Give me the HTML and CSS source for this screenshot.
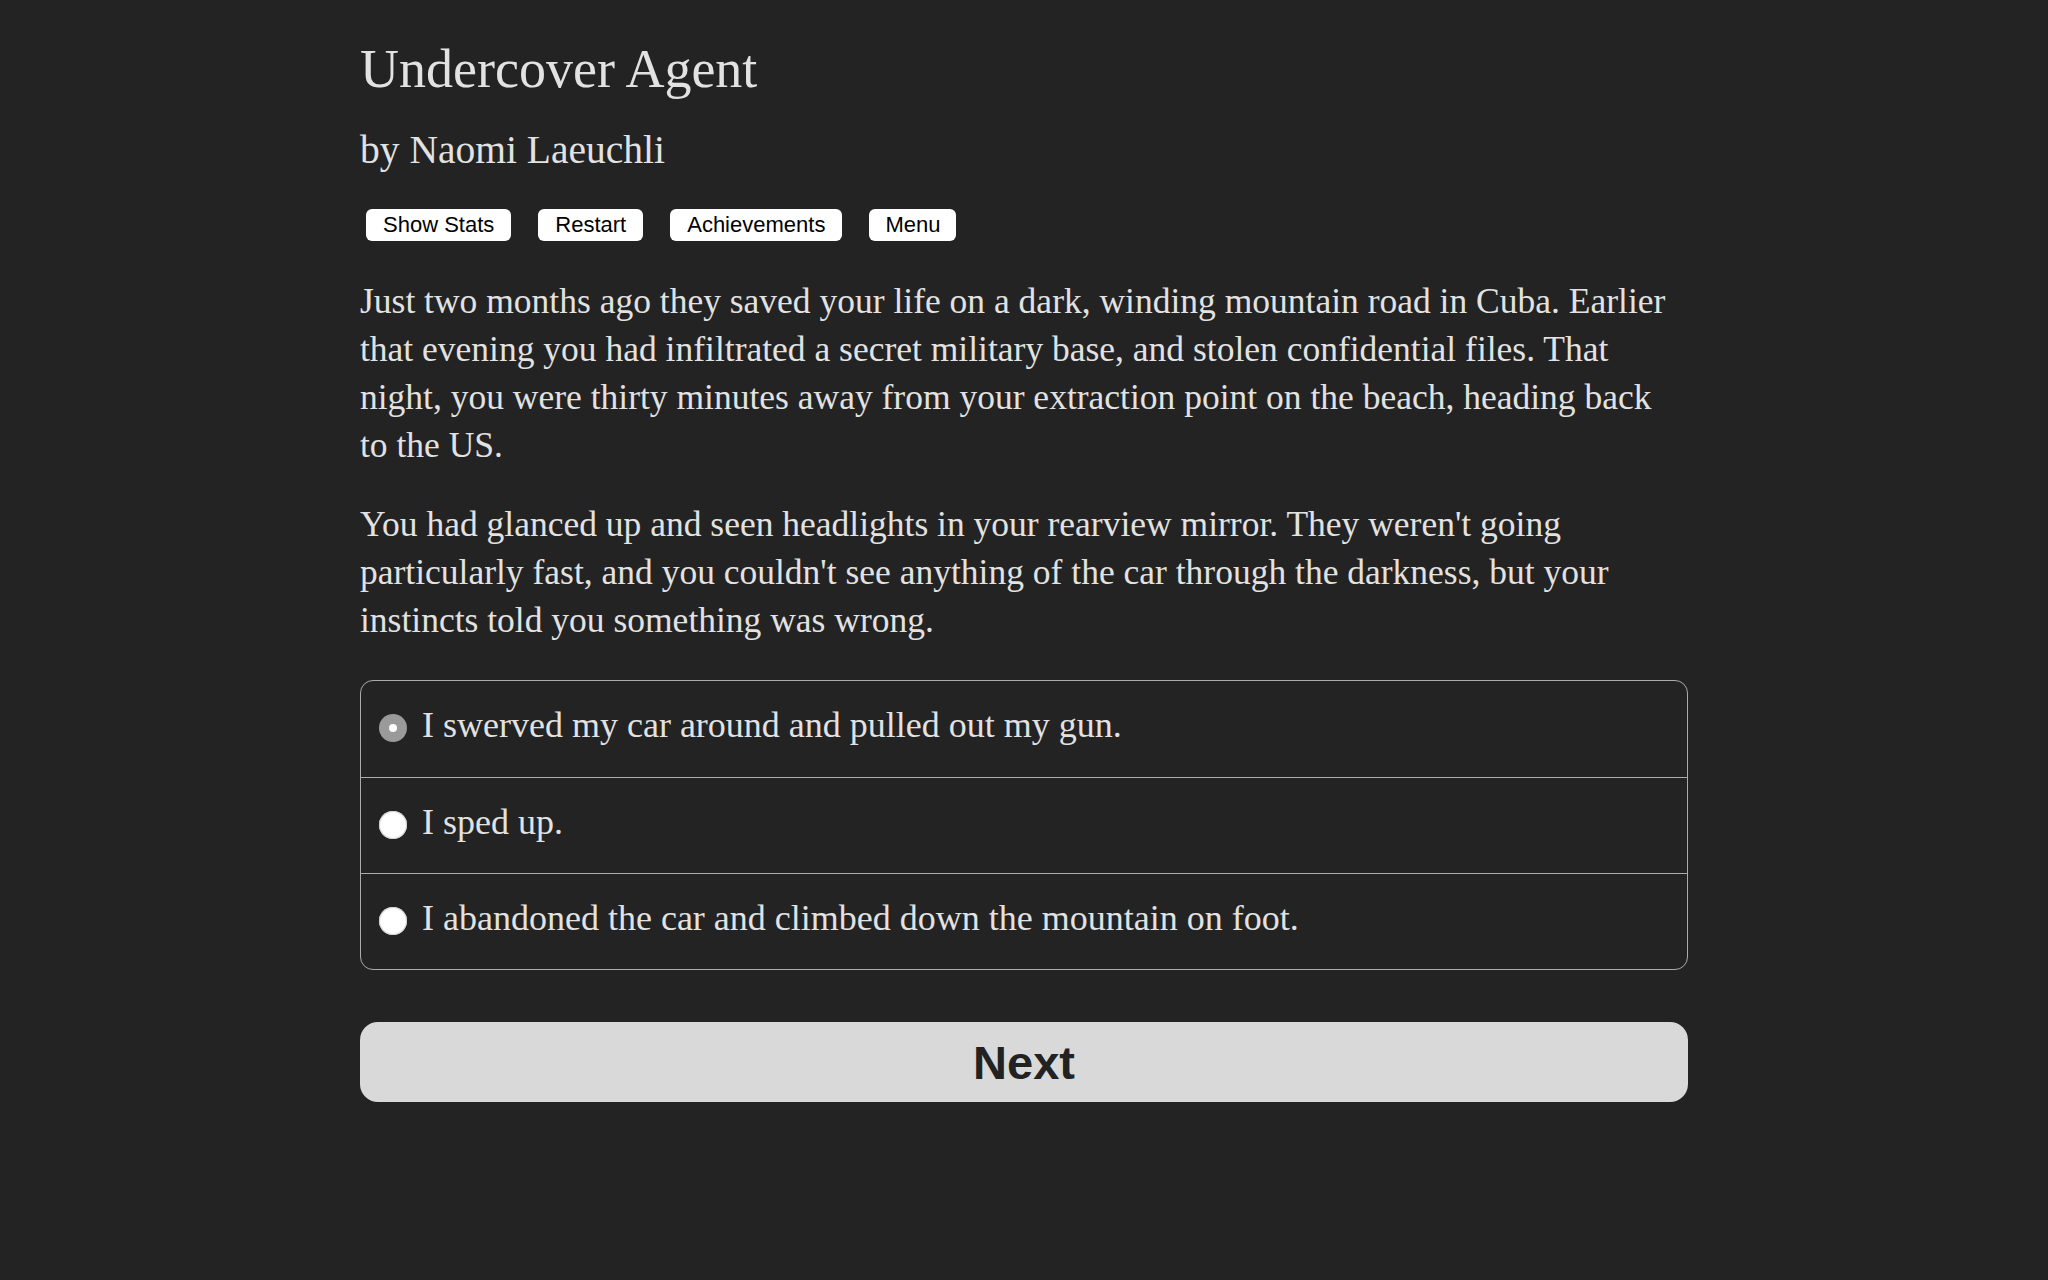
FILE: index.html
```html
<!DOCTYPE html>
<html lang="en">
<head>
<meta charset="utf-8">
<title>Undercover Agent</title>
<link rel="stylesheet" href="styles.css">
</head>
<body>
<div class="container">
  <h1 class="title">Undercover Agent</h1>
  <h2 class="author">by Naomi Laeuchli</h2>
  <div class="toolbar">
    <button class="tool-btn">Show Stats</button>
    <button class="tool-btn">Restart</button>
    <button class="tool-btn">Achievements</button>
    <button class="tool-btn">Menu</button>
  </div>
  <p class="story">Just two months ago they saved your life on a dark, winding mountain road in Cuba. Earlier<br>that evening you had infiltrated a secret military base, and stolen confidential files. That<br>night, you were thirty minutes away from your extraction point on the beach, heading back<br>to the US.</p>
  <p class="story">You had glanced up and seen headlights in your rearview mirror. They weren't going<br>particularly fast, and you couldn't see anything of the car through the darkness, but your<br>instincts told you something was wrong.</p>
  <div class="choices">
    <label class="choice"><span class="radio radio-selected"></span><span class="choice-text">I swerved my car around and pulled out my gun.</span></label>
    <label class="choice"><span class="radio"></span><span class="choice-text">I sped up.</span></label>
    <label class="choice"><span class="radio"></span><span class="choice-text">I abandoned the car and climbed down the mountain on foot.</span></label>
  </div>
  <button class="next-btn">Next</button>
</div>
</body>
</html>
```

FILE: styles.css
```css
html, body {
  margin: 0;
  padding: 0;
  background: #232323;
}

body {
  color: #e2e2e2;
  font-family: "Liberation Serif", "Times New Roman", serif;
}

.container {
  max-width: 1328px;
  margin: 0 auto;
  padding-top: 39px;
}

.title {
  margin: 0;
  font-size: 54px;
  line-height: 60px;
  font-weight: normal;
}

.author {
  margin: 27px 0 0;
  font-size: 39.5px;
  line-height: 48px;
  font-weight: normal;
}

.toolbar {
  display: flex;
  gap: 27px;
  margin: 35px 0 0 6px;
}

.tool-btn {
  height: 32px;
  padding: 0 17px;
  border: none;
  border-radius: 6px;
  background: #ffffff;
  color: #000000;
  font-family: "Liberation Sans", Arial, sans-serif;
  font-size: 22px;
  line-height: 32px;
}

.tool-btn:last-child {
  padding: 0 16px;
}

.story {
  margin: 36px 0 0;
  font-size: 35.5px;
  line-height: 48px;
  white-space: nowrap;
}

.story + .story {
  margin-top: 31px;
}

.choices {
  margin-top: 36px;
  border: 1px solid #ababab;
  border-radius: 13px;
  display: flex;
  flex-direction: column;
}

.choice {
  display: flex;
  align-items: flex-start;
  box-sizing: border-box;
  height: 96px;
  padding: 20px 18px 0;
  border-top: 1px solid #ababab;
}

.choice:first-child {
  border-top: none;
}

.radio {
  flex: none;
  width: 28px;
  height: 28px;
  margin-top: 13px;
  margin-right: 15px;
  border-radius: 50%;
  background: #ffffff;
  box-shadow: inset 0 0 1px 1px #cfcfcf;
  position: relative;
}

.radio-selected {
  background: #9a9a9a;
  box-shadow: none;
}

.radio-selected::after {
  content: "";
  position: absolute;
  left: 10px;
  top: 10px;
  width: 8px;
  height: 8px;
  border-radius: 50%;
  background: #ffffff;
}

.choice-text {
  font-size: 36px;
  line-height: 48px;
}

.next-btn {
  display: block;
  width: 100%;
  height: 80px;
  margin-top: 52px;
  border: none;
  border-radius: 18px;
  background: #d9d9d9;
  color: #222222;
  font-family: "Liberation Sans", Arial, sans-serif;
  font-size: 47px;
  font-weight: bold;
  padding: 0;
}
```
